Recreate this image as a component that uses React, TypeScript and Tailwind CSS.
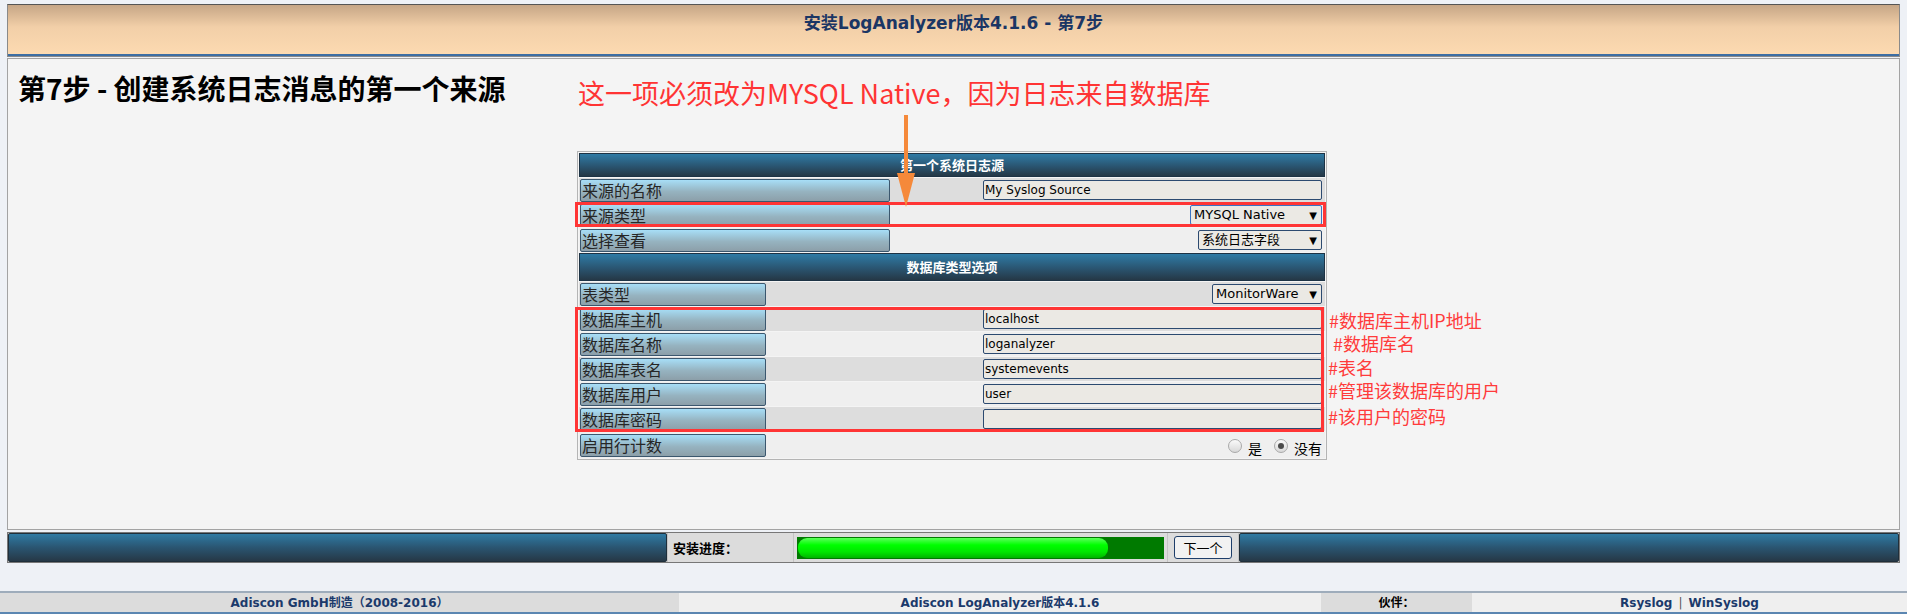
import React from 'react';

type RowProps = {
    label: string;
    w: string;
    light?: boolean;
    h?: string;
    children?: React.ReactNode;
};

const Row: React.FC<RowProps> = ({ label, w, light, h, children }) => {
    return (
        <div className={`flex items-center pl-[1px] ${h ?? 'h-[24px]'} ${light ? 'bg-[#efefef]' : 'bg-[#dddddd]'}`}>
            <div
                className={`${w} h-[23px] shrink-0 rounded-[2px] border border-[#3b576e] bg-[linear-gradient(to_bottom,#a7def7,#96b3c0_55%,#8c9fa9)] pl-[1px] text-[16px] leading-[21px] text-[#262626]`}
            >
                {label}
            </div>
            <div className="flex flex-1 justify-end pr-[3px]">{children}</div>
        </div>
    );
};

const Input: React.FC<{ value?: string }> = ({ value }) => (
    <div className="h-[20px] w-[339px] rounded-[2px] border border-[#2c4a70] bg-[#ebe9e4] pl-[1px] font-['DejaVu_Sans',sans-serif] text-[12px] leading-[18px] text-black">
        {value}
    </div>
);

const Select: React.FC<{ value: string; w: string; focus?: boolean }> = ({ value, w, focus }) => (
    <div
        className={`${w} flex h-[20px] items-center justify-between rounded-[2px] border ${focus ? 'border-[#3b73c4]' : 'border-[#2c4a70]'} bg-[#ebe9e4] pl-[3px] pr-[4px] font-['DejaVu_Sans','Noto_Sans_CJK_SC',sans-serif] text-[13px] text-black`}
    >
        <span>{value}</span>
        <span className="text-[10px]">▼</span>
    </div>
);

const Header: React.FC<{ title: string; h: string }> = ({ title, h }) => (
    <div className={`${h} flex items-center justify-center border border-[#1d3345] bg-[linear-gradient(to_bottom,#2f7ba5,#2a5571_55%,#253846)] text-[13px] font-bold text-white`}>
        {title}
    </div>
);

const Radio: React.FC<{ checked?: boolean }> = ({ checked }) => (
    <span className="mb-[3px] flex h-[14px] w-[14px] items-center justify-center rounded-full border border-[#a9a9a9] bg-[linear-gradient(to_bottom,#fafafa,#d8d8d8)]">
        {checked && <span className="h-[6px] w-[6px] rounded-full bg-[#4a4a4a]" />}
    </span>
);

const notes = [
    { text: '#数据库主机IP地址', cls: 'left-[751px] top-[157px]' },
    { text: '#数据库名', cls: 'left-[755px] top-[180px]' },
    { text: '#表名', cls: 'left-[750px] top-[204px]' },
    { text: '#管理该数据库的用户', cls: 'left-[750px] top-[227px]' },
    { text: '#该用户的密码', cls: 'left-[750px] top-[253px]' },
];

export default function App() {
    return (
        <div className="h-[614px] w-full overflow-hidden bg-[#eef1f6] pt-[4px] font-['Noto_Sans_CJK_SC','Noto_Sans',sans-serif]">
            {/* title bar */}
            <div className="mx-[7px] h-[53px] border border-[#8a8a8a] border-t-[#555]">
                <div className="h-full border-b-2 border-[#3d6ea3] bg-[linear-gradient(to_bottom,#c6a686,#f2cfa8_45%,#fcdab1)] pt-[8px] text-center font-['DejaVu_Sans','Noto_Sans_CJK_SC',sans-serif] text-[17px] font-bold leading-[20px] text-[#1b3664]">
                    安装LogAnalyzer版本4.1.6 - 第7步
                </div>
            </div>

            {/* main panel */}
            <div className="mx-[7px] mt-[1px] flex h-[472px] border border-[#a3a3a3] bg-[#f4f4f4]">
                <div className="w-[569px] shrink-0 pl-[10px] pt-[12px] text-[28px] font-bold leading-[34px] text-black">
                    第7步 - 创建系统日志消息的第一个来源
                </div>

                <div className="relative pt-[18px]">
                    <div className="pl-[1px] text-[27px] leading-[32px] text-[#ff3434]">
                        这一项必须改为MYSQL Native，因为日志来自数据库
                    </div>

                    <svg className="absolute left-[319px] top-[56px] z-10" width="20" height="92" viewBox="0 0 20 92">
                        <line x1="10" y1="0" x2="10" y2="64" stroke="#f5893a" strokeWidth="4" />
                        <polygon points="1,58 19,58 10,92" fill="#f5893a" />
                    </svg>

                    <div className="relative mt-[42px] flex w-[750px] flex-col gap-[1px] border border-[#b4b4b4] bg-[#f4f4f4] p-[1px]">
                        <Header title="第一个系统日志源" h="h-[24px]" />
                        <Row label="来源的名称" w="w-[310px]">
                            <Input value="My Syslog Source" />
                        </Row>
                        <Row label="来源类型" w="w-[310px]" light>
                            <Select value="MYSQL Native" w="w-[132px]" focus />
                        </Row>
                        <Row label="选择查看" w="w-[310px]" light>
                            <Select value="系统日志字段" w="w-[124px]" />
                        </Row>
                        <Header title="数据库类型选项" h="h-[28px]" />
                        <Row label="表类型" w="w-[186px]">
                            <Select value="MonitorWare" w="w-[110px]" />
                        </Row>
                        <Row label="数据库主机" w="w-[186px]">
                            <Input value="localhost" />
                        </Row>
                        <Row label="数据库名称" w="w-[186px]" light>
                            <Input value="loganalyzer" />
                        </Row>
                        <Row label="数据库表名" w="w-[186px]">
                            <Input value="systemevents" />
                        </Row>
                        <Row label="数据库用户" w="w-[186px]" light>
                            <Input value="user" />
                        </Row>
                        <Row label="数据库密码" w="w-[186px]">
                            <Input />
                        </Row>
                        <Row label="启用行计数" w="w-[186px]" light h="h-[26px]">
                            <div className="flex items-end pt-[4px] text-[14px] text-black">
                                <Radio />
                                <span className="ml-[6px] mr-[12px] leading-[15px]">是</span>
                                <Radio checked />
                                <span className="ml-[6px] leading-[15px]">没有</span>
                            </div>
                        </Row>

                        {/* red highlight boxes */}
                        <div className="absolute left-[-3px] top-[50px] h-[25px] w-[751px] border-[3px] border-[#ff3535]" />
                        <div className="absolute left-[-3px] top-[155px] h-[125px] w-[749px] border-[3px] border-[#ff3535]" />

                        {notes.map((n) => (
                            <div key={n.text} className={`absolute ${n.cls} whitespace-nowrap text-[18px] leading-[22px] text-[#ff3b3b]`}>
                                {n.text}
                            </div>
                        ))}
                    </div>
                </div>
            </div>

            {/* progress bar */}
            <div className="mx-[7px] mt-[2px] flex h-[31px] gap-[1px] border border-[#777] bg-[#c4c4c4]">
                <div className="w-[659px] rounded-[2px] border border-[#1f2f3b] bg-[linear-gradient(to_bottom,#2f7aa3,#2a5571_50%,#263846)]" />
                <div className="flex w-[125px] items-center bg-[#dcdcdc] pl-[5px] text-[13px] font-bold text-black">安装进度：</div>
                <div className="flex w-[373px] items-center bg-[#dcdcdc] px-[3px]">
                    <div className="flex h-[22px] w-full items-center bg-[#007a00] px-[1px]">
                        <div className="h-[20px] w-[310px] rounded-[9px] bg-[linear-gradient(to_bottom,#5cff5c,#00ff00_35%,#00e600_70%,#00b400)]" />
                    </div>
                </div>
                <div className="flex w-[70px] items-center justify-center bg-[#dcdcdc]">
                    <div className="flex h-[23px] w-[58px] items-center justify-center rounded-[3px] border border-[#1e3e6a] bg-[#f2f2f2] text-[13px] text-black">
                        下一个
                    </div>
                </div>
                <div className="flex-1 rounded-[2px] border border-[#1f2f3b] bg-[linear-gradient(to_bottom,#2f7aa3,#2a5571_50%,#263846)]" />
            </div>

            {/* footer */}
            <div className="mt-[28px] flex h-[23px] border-t-2 border-b-2 border-t-[#9eacbb] border-b-[#5b86b1] font-['DejaVu_Sans','Noto_Sans_CJK_SC',sans-serif] text-[12px] font-bold text-[#1b3a6b]">
                <div className="flex w-[679px] items-center justify-center bg-[#dcdcdc]">Adiscon GmbH制造（2008-2016）</div>
                <div className="flex w-[642px] items-center justify-center bg-[#efefef]">Adiscon LogAnalyzer版本4.1.6</div>
                <div className="flex w-[151px] items-center justify-center bg-[#dcdcdc] text-black">伙伴：</div>
                <div className="flex flex-1 items-center justify-center gap-[6px] bg-[#efefef]">
                    <span>Rsyslog</span>
                    <span className="font-normal text-[#555]">|</span>
                    <span>WinSyslog</span>
                </div>
            </div>
        </div>
    );
}
